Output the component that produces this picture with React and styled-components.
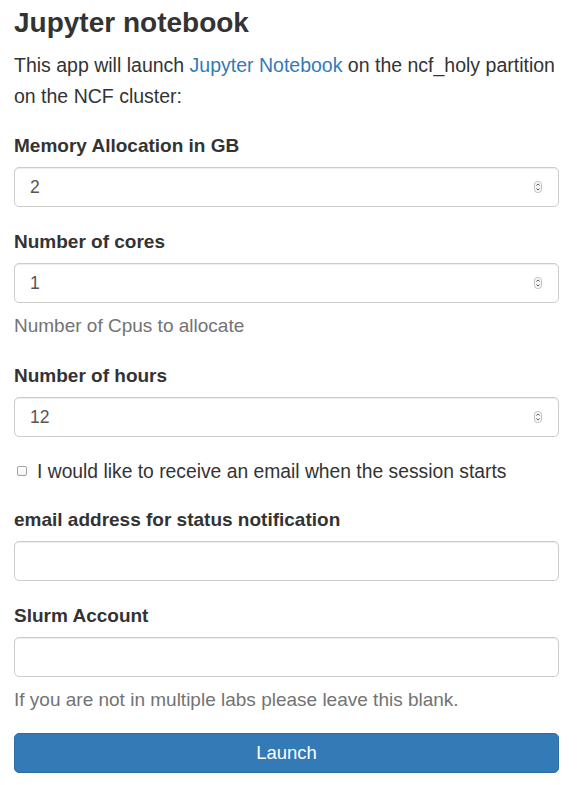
import React from 'react';
import styled, { createGlobalStyle } from 'styled-components';

const GlobalStyle = createGlobalStyle`
  body {
    margin: 0;
    background: #fff;
    color: #333;
    font-family: "Liberation Sans", Arial, Helvetica, sans-serif;
  }
`;

const Page = styled.div`
  padding: 8px 20px 0 14px;
`;

const Title = styled.h3`
  margin: 0;
  font-size: 28px;
  font-weight: bold;
  line-height: 30px;
`;

const Intro = styled.p`
  margin: 12px 0 22px;
  font-size: 19.5px;
  line-height: 31px;
  a {
    color: #337ab7;
    text-decoration: none;
  }
`;

const FormGroup = styled.div`
  display: flow-root;
  margin-bottom: ${(p) => (p.$last ? '18px' : '23px')};
`;

const Label = styled.label`
  display: block;
  font-size: 19px;
  font-weight: bold;
  line-height: 24px;
  margin-bottom: 9px;
`;

const Field = styled.div`
  display: flex;
  align-items: center;
  box-sizing: border-box;
  height: 40px;
  padding: 0 16px 0 15px;
  border: 1px solid #ccc;
  border-radius: 5px;
  box-shadow: inset 0 1px 1px rgba(0, 0, 0, 0.075);
  background: #fff;
`;

const Input = styled.input`
  flex: 1;
  min-width: 0;
  border: none;
  outline: none;
  padding: 0;
  background: transparent;
  color: #555;
  font-family: inherit;
  font-size: 17.5px;
`;

const Help = styled.p`
  margin: 11px 0 3px;
  color: #737373;
  font-size: 19px;
  line-height: 24px;
`;

const CheckRow = styled.label`
  display: flex;
  align-items: center;
  margin: 23px 0 24px;
  font-size: 19.3px;
  line-height: 24px;
`;

const Checkbox = styled.input`
  appearance: none;
  box-sizing: border-box;
  width: 10px;
  height: 10px;
  margin: -3px 10px 0 3px;
  border: 1px solid #a3a3a3;
  border-radius: 2px;
  background: linear-gradient(#fff, #f1f1f1);
`;

const Button = styled.button`
  display: block;
  width: 100%;
  height: 40px;
  border: 1px solid #2e6da4;
  border-radius: 5px;
  background: #337ab7;
  color: #fff;
  font-family: inherit;
  font-size: 18.5px;
`;

function Stepper() {
  return (
    <svg width="8" height="12" viewBox="0 0 8 12">
      <rect x="0.5" y="0.5" width="7" height="11" rx="3" fill="#fafafa" stroke="#b0b0b0" strokeWidth="0.8" />
      <path d="M2.3 4.6 L4 2.9 L5.7 4.6" fill="none" stroke="#444" strokeWidth="0.9" />
      <path d="M2.3 7.4 L4 9.1 L5.7 7.4" fill="none" stroke="#444" strokeWidth="0.9" />
    </svg>
  );
}

function NumberField({ value }) {
  return (
    <Field>
      <Input type="text" defaultValue={value} />
      <Stepper />
    </Field>
  );
}

export default function App() {
  return (
    <Page>
      <GlobalStyle />
      <Title>Jupyter notebook</Title>
      <Intro>
        This app will launch <a href="#">Jupyter Notebook</a> on the ncf_holy partition on the NCF cluster:
      </Intro>

      <FormGroup>
        <Label>Memory Allocation in GB</Label>
        <NumberField value="2" />
      </FormGroup>

      <FormGroup>
        <Label>Number of cores</Label>
        <NumberField value="1" />
        <Help>Number of Cpus to allocate</Help>
      </FormGroup>

      <FormGroup>
        <Label>Number of hours</Label>
        <NumberField value="12" />
      </FormGroup>

      <CheckRow>
        <Checkbox type="checkbox" />
        I would like to receive an email when the session starts
      </CheckRow>

      <FormGroup>
        <Label>email address for status notification</Label>
        <Field>
          <Input type="text" />
        </Field>
      </FormGroup>

      <FormGroup $last>
        <Label>Slurm Account</Label>
        <Field>
          <Input type="text" />
        </Field>
        <Help>If you are not in multiple labs please leave this blank.</Help>
      </FormGroup>

      <Button type="button">Launch</Button>
    </Page>
  );
}
